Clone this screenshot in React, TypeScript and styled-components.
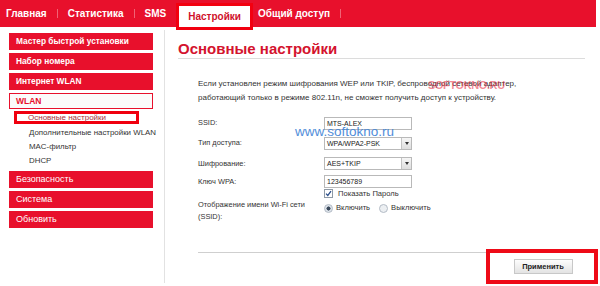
import React from "react";
import styled, { createGlobalStyle } from "styled-components";

const GlobalStyle = createGlobalStyle`
  html, body {
    margin: 0;
    padding: 0;
    background: #fff;
    font-family: "Liberation Sans", Arial, sans-serif;
  }
`;

const RED = "#e8102c";

const Page = styled.div`
  width: 600px;
  height: 286px;
  position: relative;
  overflow: hidden;
  background: #fff;
`;

const TopBar = styled.div`
  width: 596px;
  height: 27px;
  background: ${RED};
  display: flex;
  align-items: flex-start;
  padding-left: 6px;
  box-sizing: border-box;
  gap: 10px;
`;

const NavItem = styled.div`
  height: 27px;
  line-height: 27px;
  font-size: 10px;
  font-weight: bold;
  color: #fff;
  white-space: nowrap;
`;

const NavActive = styled.div`
  margin: 3px -5px 0 -11px;
  height: 27px;
  box-sizing: border-box;
  border: 3px solid #f20010;
  background: #fff;
  padding: 0 9px;
  line-height: 21px;
  font-size: 10px;
  font-weight: bold;
  color: #d0112b;
  white-space: nowrap;
  position: relative;
  z-index: 1;
`;

const NavSep = styled.div`
  width: 1px;
  height: 9px;
  margin-top: 9px;
  background: rgba(255, 255, 255, 0.35);
`;

const Body = styled.div`
  display: flex;
  align-items: flex-start;
`;

const Sidebar = styled.div`
  width: 165px;
  height: 253px;
  margin-top: 3px;
  box-sizing: border-box;
  border-right: 1px solid #e2e2e2;
  padding: 3px 11px 0 9px;
  display: flex;
  flex-direction: column;
  gap: 3px;
`;

const MenuItem = styled.div<{ $bold?: boolean }>`
  height: 17px;
  line-height: 17px;
  background: ${RED};
  color: #fff;
  font-size: ${(p) => (p.$bold ? "8.3px" : "9px")};
  font-weight: ${(p) => (p.$bold ? "bold" : "normal")};
  padding-left: 7px;
  white-space: nowrap;
`;

const MenuOpen = styled.div`
  height: 16px;
  line-height: 14px;
  box-sizing: border-box;
  border: 1px solid ${RED};
  background: #fbfbfb;
  color: ${RED};
  font-size: 8.5px;
  font-weight: bold;
  padding-left: 6px;
`;

const SubList = styled.div`
  display: flex;
  flex-direction: column;
`;

const SubActive = styled.div`
  margin: -1px 14px 2px 5px;
  height: 13px;
  box-sizing: border-box;
  border: 3px solid #f0000f;
  line-height: 7px;
  font-size: 8px;
  color: #a8323a;
  padding-left: 11px;
  white-space: nowrap;
  background: #fff;
`;

const SubItem = styled.div`
  height: 14px;
  line-height: 14px;
  font-size: 7.9px;
  color: #333;
  padding-left: 20px;
  white-space: nowrap;
`;

const Main = styled.div`
  flex: 1;
  padding: 13px 0 0 13px;
  box-sizing: border-box;
`;

const Title = styled.h1`
  margin: 0;
  font-size: 15px;
  line-height: 18px;
  font-weight: bold;
  color: #d4132e;
  border-bottom: 1px solid #dcdcdc;
  width: 407px;
`;

const Content = styled.div`
  padding: 18px 2px 0 20px;
`;

const Note = styled.p`
  margin: 0 0 8px;
  font-size: 8px;
  line-height: 14px;
  color: #333;
  white-space: nowrap;
`;

const Form = styled.div`
  display: grid;
  grid-template-columns: 126px auto;
`;

const Label = styled.div<{ $h: number; $top?: boolean }>`
  font-size: 7.4px;
  line-height: 12px;
  color: #333;
  height: ${(p) => p.$h}px;
  display: flex;
  align-items: ${(p) => (p.$top ? "flex-start" : "center")};
  padding-top: ${(p) => (p.$top ? "2px" : "0")};
  box-sizing: border-box;
`;

const Field = styled.div<{ $h: number; $top?: boolean }>`
  height: ${(p) => p.$h}px;
  display: flex;
  align-items: ${(p) => (p.$top ? "flex-start" : "center")};
  padding-top: ${(p) => (p.$top ? "6px" : "0")};
  box-sizing: border-box;
  gap: 3px;
  font-size: 7.6px;
  color: #333;
`;

const TextBox = styled.div`
  width: 88px;
  height: 13px;
  box-sizing: border-box;
  border: 1px solid #b9b9b9;
  font-size: 7px;
  line-height: 11px;
  padding-left: 2px;
  color: #222;
  background: #fff;
`;

const SelectBox = styled(TextBox)`
  display: flex;
  justify-content: space-between;
`;

const Arrow = styled.div`
  width: 10px;
  height: 11px;
  box-sizing: border-box;
  border-left: 1px solid #c4c4c4;
  background: linear-gradient(#f6f6f6, #dedede);
  display: flex;
  align-items: center;
  justify-content: center;
  &::after {
    content: "";
    border-left: 2px solid transparent;
    border-right: 2px solid transparent;
    border-top: 3px solid #333;
  }
`;

const Check = styled.span`
  width: 7px;
  height: 7px;
  border: 1px solid #8f9aa6;
  background: #fff;
  display: inline-flex;
  align-items: center;
  justify-content: center;
  margin-right: 2px;
`;

const Radio = styled.span<{ $on?: boolean }>`
  width: 7px;
  height: 7px;
  border-radius: 50%;
  border: 1px solid #b4bcc6;
  background: ${(p) =>
    p.$on ? "radial-gradient(circle, #3b4a5c 0 1.8px, #dfe5ec 2.3px)" : "#eceff2"};
  display: inline-block;
  margin-top: 1px;
`;

const RadioLabel = styled.span`
  margin-right: 6px;
`;

const Footer = styled.div`
  display: flex;
  align-items: flex-start;
  margin-top: 24px;
`;

const Line = styled.div`
  flex: 1;
  margin-top: 3px;
  border-top: 1px solid #cfcfcf;
`;

const ApplyFrame = styled.div`
  width: 112px;
  height: 35px;
  box-sizing: border-box;
  border: 4px solid #ee0a17;
  display: flex;
  align-items: center;
  justify-content: center;
  padding-left: 2px;
`;

const ApplyButton = styled.div`
  width: 59px;
  height: 15px;
  box-sizing: border-box;
  border: 1px solid #c8c8c8;
  background: linear-gradient(#fdfdfd, #e3e3e3);
  font-size: 7.5px;
  font-weight: bold;
  line-height: 13px;
  text-align: center;
  color: #222;
`;

const WatermarkUrl = styled.div`
  position: absolute;
  left: 295px;
  top: 124px;
  font-size: 13.5px;
  color: #3d82d6;
  opacity: 0.9;
`;

const WatermarkLogo = styled.div`
  position: absolute;
  left: 428px;
  top: 79px;
  font-size: 11px;
  font-weight: bold;
  letter-spacing: -0.4px;
  color: rgba(232, 40, 60, 0.55);
`;

const navLeft = ["Главная", "Статистика", "SMS"];

const App = () => {
  return (
    <>
      <GlobalStyle />
      <Page>
        <TopBar>
          {navLeft.map((n) => (
            <React.Fragment key={n}>
              <NavItem>{n}</NavItem>
              <NavSep />
            </React.Fragment>
          ))}
          <NavActive>Настройки</NavActive>
          <NavItem>Общий доступ</NavItem>
          <NavSep />
        </TopBar>
        <Body>
          <Sidebar>
            <MenuItem $bold>Мастер быстрой установки</MenuItem>
            <MenuItem $bold>Набор номера</MenuItem>
            <MenuItem $bold>Интернет WLAN</MenuItem>
            <MenuOpen>WLAN</MenuOpen>
            <SubList>
              <SubActive>Основные настройки</SubActive>
              <SubItem>Дополнительные настройки WLAN</SubItem>
              <SubItem>MAC-фильтр</SubItem>
              <SubItem>DHCP</SubItem>
            </SubList>
            <MenuItem>Безопасность</MenuItem>
            <MenuItem>Система</MenuItem>
            <MenuItem>Обновить</MenuItem>
          </Sidebar>
          <Main>
            <Title>Основные настройки</Title>
            <Content>
              <Note>
                Если установлен режим шифрования WEP или TKIP, беспроводной сетевой адаптер,
                <br />
                работающий только в режиме 802.11n, не сможет получить доступ к устройству.
              </Note>
              <Form>
                <Label $h={20}>SSID:</Label>
                <Field $h={20}>
                  <TextBox>MTS-ALEX</TextBox>
                </Field>
                <Label $h={20}>Тип доступа:</Label>
                <Field $h={20}>
                  <SelectBox>
                    WPA/WPA2-PSK
                    <Arrow />
                  </SelectBox>
                </Field>
                <Label $h={21}>Шифрование:</Label>
                <Field $h={21}>
                  <SelectBox>
                    AES+TKIP
                    <Arrow />
                  </SelectBox>
                </Field>
                <Label $h={15}>Ключ WPA:</Label>
                <Field $h={15}>
                  <TextBox>123456789</TextBox>
                </Field>
                <Label $h={8} />
                <Field $h={8}>
                  <Check>
                    <svg width="7" height="7" viewBox="0 0 7 7">
                      <path d="M1 3.6 L2.8 5.4 L6 1.2" fill="none" stroke="#2b4f8a" strokeWidth="1.3" />
                    </svg>
                  </Check>
                  Показать Пароль
                </Field>
                <Label $h={28} $top>
                  Отображение имени Wi-Fi сети
                  <br />
                  (SSID):
                </Label>
                <Field $h={28} $top>
                  <Radio $on />
                  <RadioLabel>Включить</RadioLabel>
                  <Radio />
                  Выключить
                </Field>
              </Form>
              <Footer>
                <Line />
                <ApplyFrame>
                  <ApplyButton>Применить</ApplyButton>
                </ApplyFrame>
              </Footer>
            </Content>
          </Main>
        </Body>
        <WatermarkLogo>SOFTOKNO.RU</WatermarkLogo>
        <WatermarkUrl>www.softokno.ru</WatermarkUrl>
      </Page>
    </>
  );
};

export default App;
